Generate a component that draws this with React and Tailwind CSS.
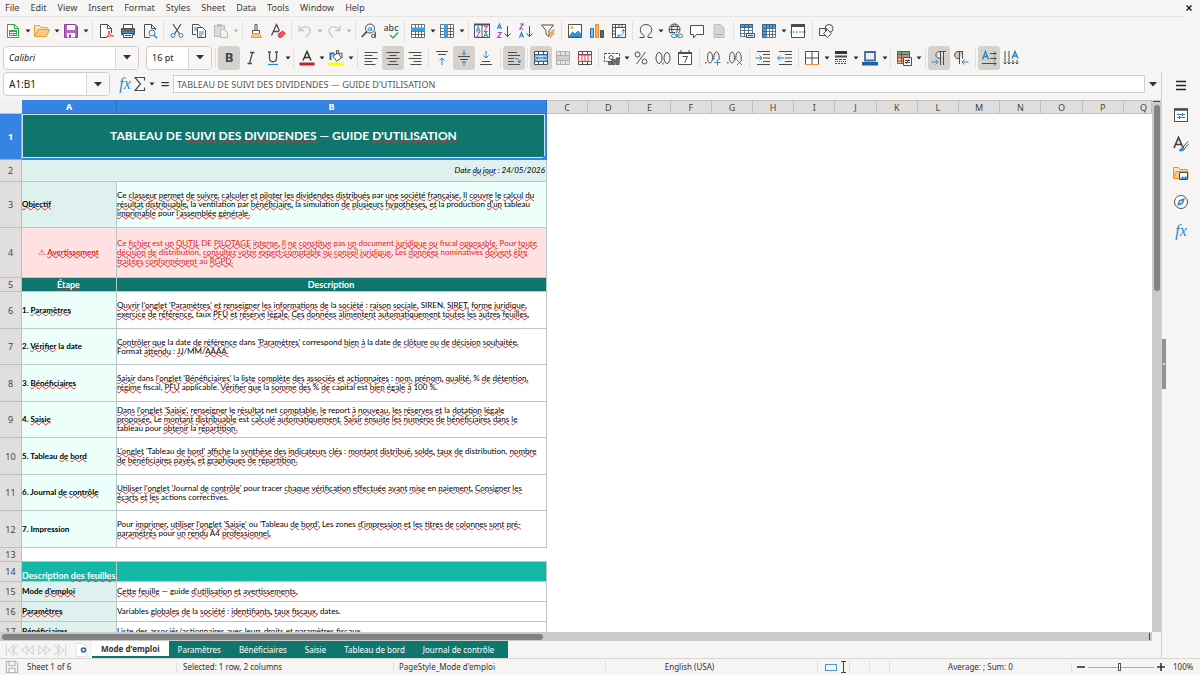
import { useState } from 'react';
import clsx from 'clsx';

const INK = '#4d4d4d';
const BLUE = '#2a87c8';

const MENUS = ['File', 'Edit', 'View', 'Insert', 'Format', 'Styles', 'Sheet', 'Data', 'Tools', 'Window', 'Help'];
const COLUMNS = ['C', 'D', 'E', 'F', 'G', 'H', 'I', 'J', 'K', 'L', 'M', 'N', 'O', 'P', 'Q'];
const SHEETS = ["Mode d'emploi", 'Paramètres', 'Bénéficiaires', 'Saisie', 'Tableau de bord', 'Journal de contrôle'];
const TITLE = "TABLEAU DE SUIVI DES DIVIDENDES — GUIDE D'UTILISATION";

// Text between underscores is flagged by the spell checker
const STEPS = [
  {
    label: '1. _Paramètres_',
    lines: [
      "_Ouvrir l'onglet 'Paramètres' et renseigner les informations de_ la _société_ : _raison sociale,_ SIREN, _SIRET, forme juridique,_",
      '_exercice de référence,_ taux _PFU et réserve légale. Ces données alimentent automatiquement toutes les autres feuilles._',
    ],
  },
  {
    label: '2. _Vérifier_ la date',
    lines: [
      "_Contrôler que_ la date _de référence_ dans _'Paramètres'_ correspond _bien à_ la date _de clôture ou de décision souhaitée._",
      'Format _attendu_ : _JJ_/MM/_AAAA._',
    ],
  },
  {
    label: '3. _Bénéficiaires_',
    lines: [
      "_Saisir_ dans _l'onglet 'Bénéficiaires'_ la _liste complète des associés et actionnaires_ : _nom, prénom, qualité,_ % _de détention,_",
      '_régime_ fiscal, _PFU_ applicable. _Vérifier que_ la _somme des_ % _de_ capital est _bien égale à_ 100 %.',
    ],
  },
  {
    label: '4. _Saisie_',
    lines: [
      "_Dans l'onglet 'Saisie', renseigner le résultat_ net _comptable, le_ report _à nouveau, les réserves et_ la _dotation légale_",
      '_proposée._ Le _montant distribuable_ est _calculé automatiquement. Saisir ensuite les numéros de bénéficiaires dans le_',
      'tableau pour _obtenir_ la _répartition._',
    ],
  },
  {
    label: '5. Tableau _de bord_',
    lines: [
      "_L'onglet_ 'Tableau _de bord' affiche_ la _synthèse des indicateurs clés_ : _montant distribué, solde, taux de_ distribution, _nombre_",
      '_de bénéficiaires payés, et graphiques de répartition._',
    ],
  },
  {
    label: '6. Journal _de contrôle_',
    lines: [
      "_Utiliser l'onglet_ 'Journal _de contrôle'_ pour tracer _chaque vérification effectuée avant mise_ en _paiement. Consigner les_",
      '_écarts et les_ actions correctives.',
    ],
  },
  {
    label: '7. Impression',
    lines: [
      "Pour _imprimer, utiliser l'onglet 'Saisie'_ ou 'Tableau _de bord'._ Les zones _d'impression et les titres de colonnes sont pré-_",
      '_paramétrés_ pour _un rendu_ A4 _professionnel._',
    ],
  },
];

const SHEET_NOTES = [
  { label: "Mode _d'emploi_", text: "_Cette feuille_ — guide _d'utilisation et avertissements._" },
  { label: '_Paramètres_', text: 'Variables _globales de_ la _société_ : _identifiants, taux fiscaux,_ dates.' },
  { label: '_Bénéficiaires_', text: '_Liste des associés/actionnaires avec leurs droits et paramètres fiscaux_' },
];

const Spell = ({ children }) =>
  children.split('_').map((part, i) =>
    i % 2 === 0
      ? part
      : part.split(' ').map((word, j) => (
          <span key={`${i}-${j}`}>
            {j > 0 && ' '}
            <span className="underline decoration-[#e0302c] decoration-wavy decoration-1 underline-offset-[-1px] [text-decoration-skip-ink:none]">
              {word}
            </span>
          </span>
        ))
  );

const Lines = ({ lines }) =>
  lines.map((line) => (
    <div key={line} className="whitespace-nowrap">
      <Spell>{line}</Spell>
    </div>
  ));

/* ---------- icons ---------- */

const Svg = ({ children, size = 'size-4' }) => (
  <svg viewBox="0 0 16 16" fill="none" stroke={INK} strokeWidth="1" className={clsx('shrink-0', size)} aria-hidden="true">
    {children}
  </svg>
);

const Caret = ({ faded }) => (
  <svg viewBox="0 0 6 4" className="h-[4px] w-[6px] shrink-0" aria-hidden="true">
    <path d="M0.6 0.4h4.8L3 3.6z" fill={faded ? '#b5b5b5' : '#222'} />
  </svg>
);

const BigCaret = () => (
  <svg viewBox="0 0 8 5" className="h-[5px] w-[8px] shrink-0" aria-hidden="true">
    <path d="M0 0h8L4 4.6z" fill="#333" />
  </svg>
);

const NewIcon = () => (
  <Svg>
    <path d="M2.5 1.5h7l4 4v9h-11z" fill="#fff" stroke="#3d9b52" />
    <path d="M9.5 1.5v4h4" stroke="#3d9b52" />
    <path d="M4 7h8v6H4z" fill="#3fa757" stroke="none" />
    <path d="M5 9.5h6M5 11.5h3M9 11.5h2" stroke="#fff" />
  </Svg>
);
const OpenIcon = () => (
  <Svg>
    <path d="M.5 13V2.500h5l1.500 2h6V7" fill="#fbe3bd" stroke="#e9a03b" />
    <path d="M.5 13.500L4 6.500h11.500l-3 7z" fill="#fcc87a" stroke="#e9a03b" />
  </Svg>
);
const SaveIcon = () => (
  <Svg>
    <path d="M1.500 1.500h11l2 2v11h-13z" fill="#b565c4" stroke="#8e3fa0" />
    <path d="M4 2h8v5H4zM4 10h8v4.500H4z" fill="#fff" stroke="none" />
    <path d="M6 11.500h2v3H6z" fill="#8e3fa0" stroke="none" />
  </Svg>
);
const PdfIcon = () => (
  <Svg>
    <path d="M13.500 10V5.500l-4-4h-7v13H8" fill="#fff" />
    <path d="M9.500 1.500v4h4" />
    <path d="M8 14.500c2-1 3.200-4 3-6.500 .3 3 1.500 4.500 4.500 5-2.500-.6-5 0-7.500 1.500z" stroke="#dd3b40" />
  </Svg>
);
const PrintIcon = () => (
  <Svg>
    <path d="M3.500 5V1.500h9V5" fill="#fff" />
    <path d="M1.500 5.500h13v6h-13z" fill="#5f6b76" />
    <path d="M3 9h10v1.500H3z" fill="#3d95d6" stroke="none" />
    <path d="M3.500 10.500h9v4h-9z" fill="#fff" />
    <path d="M5 12.500h6" />
  </Svg>
);
const PreviewIcon = () => (
  <Svg>
    <path d="M13.500 7V5.500l-4-4h-7v13H8M9.500 1.500v4h4" />
    <circle cx="10" cy="10" r="3" fill="#eaf4fb" stroke={BLUE} />
    <path d="M12.200 12.200l3 3" stroke={BLUE} strokeWidth="1.400" />
  </Svg>
);
const CutIcon = () => (
  <Svg>
    <path d="M4 1l6.500 10M12 1L5.500 11" strokeWidth="1.200" />
    <circle cx="4" cy="12.500" r="2" stroke={BLUE} />
    <circle cx="12" cy="12.500" r="2" stroke={BLUE} />
  </Svg>
);
const CopyIcon = () => (
  <Svg>
    <path d="M5 11.500H1.500v-10h6l2 2V4" fill="#fff" />
    <path d="M6.500 4.500h5l3 3v7h-8z" fill="#fff" />
    <path d="M8 9h5M8 11h5M8 13h3M3 5h3M3 7h3" stroke={BLUE} />
  </Svg>
);
const PasteIcon = () => (
  <Svg>
    <path d="M1.500 2.500h10v11h-10z" fill="#dedddc" stroke="#bbb" />
    <path d="M4.500 1.500h4v2h-4z" fill="#c4c3c2" stroke="#bbb" />
    <path d="M7.500 6.500h4l3 3v5h-7z" fill="#f2f1f0" stroke="#bbb" />
  </Svg>
);
const CloneIcon = () => (
  <Svg>
    <path d="M7 1.500h2v6H7zM4.500 7.500h7v3h-7z" fill="#fff" />
    <path d="M4.500 10.500l-1 4h10l-2-4z" fill="#fbc476" stroke="#e9a03b" />
    <path d="M3 14.500h11" stroke="#e9a03b" />
  </Svg>
);
const ClearIcon = () => (
  <Svg>
    <path d="M1.500 12.500L6.500 1.500l3 6.500M3.300 8.500H9" strokeWidth="1.300" />
    <path d="M8 11.500l4.500-3.500 2.800 2.500L11 14.500H9z" fill="#ee5a5f" stroke="#d8353b" />
  </Svg>
);
const UndoIcon = ({ flip }) => (
  <Svg>
    <path
      d={flip ? 'M14 2.500v5H9M14 7.500C10 2 3 3 3 8c0 3 2 4 4 6' : 'M2 2.500v5h5M2 7.500C6 2 13 3 13 8c0 3-2 4-4 6'}
      stroke="#c6c5c4"
      strokeWidth="1.300"
    />
  </Svg>
);
const FindIcon = () => (
  <Svg>
    <circle cx="9" cy="5.500" r="4.500" fill="#f4fafd" />
    <path d="M5.800 8.700L.8 14" strokeWidth="1.800" />
    <circle cx="8.600" cy="6.200" r="1.500" stroke={BLUE} />
    <path d="M10.500 4.500v3.300" stroke={BLUE} />
    <circle cx="12.300" cy="13" r="1.700" />
    <path d="M14.300 8.500v6.200" strokeWidth="1.200" />
  </Svg>
);
const SpellIcon = () => (
  <span className="relative flex h-4 w-4 justify-center text-[9px] leading-[9px] text-[#333]">
    abc
    <svg viewBox="0 0 10 7" className="absolute right-0 bottom-0 h-[7px] w-[10px]" aria-hidden="true">
      <path d="M1 3l3 3 5-5.500" fill="none" stroke="#3fa757" strokeWidth="1.400" />
    </svg>
  </span>
);
const GridLines = ({ color = INK }) => (
  <path d="M1.500 1.500h13v13h-13zM1.500 5.500h13M1.500 8.500h13M1.500 11.500h13M5.500 1.500v13M8.500 1.500v13M11.500 1.500v13" stroke={color} strokeWidth=".8" />
);
const RowIcon = () => (
  <Svg>
    <path d="M1 1h14v14H1z" fill="#fff" stroke="none" />
    <GridLines />
    <path d="M1 4.500h14v4H1z" fill="#3d9fe0" stroke="none" />
  </Svg>
);
const ColumnIcon = () => (
  <Svg>
    <path d="M1 1h14v14H1z" fill="#fff" stroke="none" />
    <GridLines />
    <path d="M5 1h4v14H5z" fill="#3d9fe0" stroke="none" />
  </Svg>
);
const LETTER_A = 'M0 5L2 0l2 5M.8 3.500h2.400';
const LETTER_Z = 'M.3 0h3.400L.3 5h3.500';
const SortIcon = () => (
  <Svg>
    <path d="M.5 1.500h15v13H.5z" fill="#fff" />
    <path d="M0 1.500h16" strokeWidth="2" />
    <path d="M8 2v12.500" />
    <g stroke={BLUE}><path d={LETTER_A} transform="translate(2.200 3.500)" /><path d={LETTER_A} transform="translate(9.800 9)" /></g>
    <g stroke="#a848b5"><path d={LETTER_Z} transform="translate(2.200 9)" /><path d={LETTER_Z} transform="translate(9.800 3.500)" /></g>
  </Svg>
);
const AzIcon = ({ down }) => (
  <Svg>
    <path d={LETTER_A} stroke={BLUE} transform={down ? 'translate(1.500 9.500)' : 'translate(1.500 1)'} strokeWidth="1.200" />
    <path d={LETTER_Z} stroke="#a848b5" transform={down ? 'translate(1.500 1)' : 'translate(1.500 9.500)'} strokeWidth="1.200" />
    <path d="M11.500 3v10.500M8.500 10.500l3 3 3-3" />
  </Svg>
);
const FilterIcon = () => (
  <Svg>
    <path d="M1.500 2h12L9 7.500v6L6 11V7.500z" fill="#fff" />
    <path d="M12.500 7l-3 4h2l-1.500 4 4.500-5h-2l2-3z" fill="#fbb04c" stroke="#e9902b" strokeWidth=".6" />
  </Svg>
);
const ImageIcon = () => (
  <Svg>
    <path d="M1.500 1.500h13v13h-13z" fill="#fff" />
    <path d="M2 14l3.500-5L8 11l3-3 3.500 4v2z" fill="#3d95d6" stroke="#2372b4" strokeWidth=".8" />
    <circle cx="5" cy="4.500" r="1.500" fill="#fbb04c" stroke="none" />
  </Svg>
);
const ChartIcon = () => (
  <Svg>
    <path d="M1.500 5.500h3v9h-3z" fill="#83beec" stroke="#2372b4" />
    <path d="M6.500 1.500h3v13h-3z" fill="#fbb04c" stroke="#e9902b" />
    <path d="M11.500 7.500h3v7h-3z" fill="#666" />
  </Svg>
);
const PivotIcon = () => (
  <Svg>
    <path d="M1.500 1.500h13v13h-13z" fill="#fff" />
    <path d="M1.500 4.500h13M4.500 1.500v13M8 1.500v3M11 1.500v3M1.500 8h3M1.500 11h3" />
    <path d="M7 13c4 0 5.500-2 5.500-6M10.500 8.500l2-2 1.500 2M8.500 11l-2 2 2 1.500" stroke={BLUE} />
  </Svg>
);
const OmegaIcon = () => (
  <Svg>
    <path d="M1.500 14.500H6v-2C3 10.500 2.300 8.500 2.300 6.500 2.300 3.500 4.800 1.500 8 1.500s5.700 2 5.700 5c0 2-.7 4-3.700 6v2h4.500" />
  </Svg>
);
const LinkIcon = () => (
  <Svg>
    <circle cx="7.500" cy="6.500" r="5.500" />
    <path d="M7.500 1c-4 3-4 7 0 11M7.500 1c4 3 4 7 0 11M2 6.500h11M3 3.500h9M3 9.500h5" />
    <path d="M4 10h12v6H4z" fill="#f6f5f4" stroke="none" />
    <rect x="4.500" y="11" width="5.500" height="3.500" rx="1.700" stroke={BLUE} />
    <rect x="10" y="11" width="5.500" height="3.500" rx="1.700" stroke={BLUE} />
    <path d="M8 12.800h4.500" stroke={BLUE} />
  </Svg>
);
const CommentIcon = () => (
  <Svg>
    <path d="M1.500 2.500h13v9h-7L4.500 15v-3.500h-3z" fill="#fff" />
  </Svg>
);
const HeaderIcon = () => (
  <Svg>
    <path d="M3 1.500h6.500l3.500 3.500v9.500H3z" fill="#d6d5d4" stroke="#bfbebd" />
    <path d="M5 11.500h6" stroke="#aaa" />
  </Svg>
);
const PrintAreaIcon = () => (
  <Svg>
    <path d="M1 1h13v13H1z" fill="#fff" stroke="none" />
    <path d="M1 1h13v4H1z" fill="#3d9fe0" stroke="none" />
    <path d="M1.500 1.500h12v12h-12zM1.500 4.500h12M1.500 7.500h12M1.500 10.500h12M5.500 1.500v12M9.500 1.500v12" stroke="#3b5873" strokeWidth=".8" />
    <path d="M7.500 10.500h8v4h-8z" fill="#dcecf7" />
    <path d="M9 12.500h5" />
  </Svg>
);
const FreezeIcon = () => (
  <Svg>
    <path d="M1 1h14v14H1z" fill="#fff" stroke="none" />
    <path d="M1 1h14v4H1zM1 1h4v14H1z" fill="#3d9fe0" stroke="none" />
    <GridLines color="#3b5873" />
  </Svg>
);
const SplitIcon = () => (
  <Svg>
    <path d="M1.500 1.500h13v13h-13z" fill="#fff" />
    <path d="M1 2.500h14" strokeWidth="3" />
    <path d="M0 9h16" stroke={BLUE} strokeDasharray="2 1" />
  </Svg>
);
const ShapesIcon = () => (
  <Svg>
    <path d="M1.500 5.500h7v7h-7z" />
    <circle cx="11" cy="5.500" r="4" />
    <path d="M9.500 6.500l4 4-4 4-4-4z" fill="#f6f5f4" />
  </Svg>
);

const AlignIcon = ({ kind }) => (
  <Svg>
    {kind === 'left' && <path d="M1.500 2.500h13M1.500 5.500h8M1.500 8.500h13M1.500 11.500h8M1.500 14.500h11" />}
    {kind === 'center' && <path d="M1.500 2.500h13M4.500 5.500h7M1.500 8.500h13M4.500 11.500h7M2.500 14.500h11" />}
    {kind === 'right' && <path d="M1.500 2.500h13M6.500 5.500h8M1.500 8.500h13M6.500 11.500h8M3.500 14.500h11" />}
  </Svg>
);
const VAlignIcon = ({ kind }) => (
  <Svg>
    {kind === 'top' && <><path d="M2 1.500h12M4 4.500h8" /><path d="M8 15V8M5.500 10.500L8 8l2.500 2.500" stroke={BLUE} /></>}
    {kind === 'middle' && <><path d="M2 6.500h12M4 9.500h8" /><path d="M8 0v5M6 3l2 2 2-2M8 16v-5M6 13l2-2 2 2" stroke={BLUE} /></>}
    {kind === 'bottom' && <><path d="M2 14.500h12M4 11.500h8" /><path d="M8 1v7M5.500 5.500L8 8l2.500-2.500" stroke={BLUE} /></>}
  </Svg>
);
const WrapIcon = () => (
  <Svg>
    <path d="M2 2.500h9M2 5.500h12M2 8.500h6M2 11.500h6M2 14.500h12" />
    <path d="M9 8.500c3 0 4.500 1 4.500 4M11.500 11l2 2 1.500-2.500" stroke={BLUE} />
  </Svg>
);
const MergeIcon = () => (
  <Svg>
    <path d="M1.500 1.500h13v13h-13z" fill="#fff" />
    <path d="M1.500 4.500h13M1.500 11.500h13M5.500 1.500v3M10.500 1.500v3M5.500 11.500v3M10.500 11.500v3" />
    <path d="M2 5h12v6H2z" fill="#cfe8f8" stroke={BLUE} />
    <path d="M3 8h10M5 6.500L3.500 8 5 9.500M11 6.500L12.500 8 11 9.500" stroke="#1d6ca8" />
  </Svg>
);
const UnmergeIcon = () => (
  <Svg>
    <path d="M1.500 1.500h13v13h-13z" fill="#e4e3e2" stroke="#b0afae" />
    <path d="M1.500 5.500h13M1.500 10.500h13M5.500 1.500v13M10.500 1.500v4M10.500 10.500v4" stroke="#b0afae" />
    <path d="M2 6h12v4H2z" fill="#cfcecd" stroke="none" />
  </Svg>
);
const SplitCellsIcon = () => (
  <Svg>
    <path d="M1.500 1.500h13v13h-13z" fill="#fff" />
    <path d="M1.500 4.500h13M1.500 11.500h13M5.500 1.500v3M10.500 1.500v3M5.500 11.500v3M10.500 11.500v3" />
    <path d="M1.500 5h13v6.500h-13zM5 5v6.500M8 5v6.500M11 5v6.500" stroke="#dd3b40" />
  </Svg>
);
const ItalicIcon = () => (
  <Svg>
    <path d="M7 2.500h4.500M4.500 13.500H9M9.500 2.500l-3 11" strokeWidth="1.300" />
  </Svg>
);
const UnderlineIcon = () => (
  <Svg>
    <path d="M4.500 2v6c0 5 7 5 7 0V2M3 2h3M10 2h3" strokeWidth="1.300" />
    <path d="M3 14.500h10" stroke={BLUE} strokeWidth="1.200" />
  </Svg>
);
const FontColorIcon = () => (
  <Svg>
    <path d="M4 10.500L8 1.500l4 9M5.500 7.500h5" strokeWidth="1.500" stroke="#333" />
    <path d="M.5 12.500h15v3H.5z" fill="#c9211e" stroke="none" />
  </Svg>
);
const HighlightIcon = () => (
  <Svg>
    <path d="M1.500 3.500h5M2.500 4v6" stroke="#2372b4" strokeWidth="2" />
    <path d="M5 6l5-3 3.500 5-5 3z" fill="#fff" />
    <path d="M8.500 4V.5h2v2.500M11 3.500l3-.5v5" />
    <path d="M.5 12.500h15v3H.5z" fill="#ff0" stroke="none" />
  </Svg>
);
const CurrencyIcon = () => (
  <Svg>
    <path d="M.5 3.500h15v8H.5z" strokeDasharray="2.500 1.200" fill="#fff" />
    <circle cx="7" cy="7.500" r="2" />
    <path d="M4.500 14.500v-3h3v3zM8 14.500V9.500h3v5zM12 14.500V8h3v6.500z" fill="#777" strokeWidth=".8" />
  </Svg>
);
const PercentIcon = () => (
  <Svg>
    <circle cx="4.500" cy="4.500" r="2.500" />
    <circle cx="11.500" cy="11.500" r="2.500" />
    <path d="M12.500 2l-9 12" />
  </Svg>
);
const DecimalIcon = () => (
  <Svg>
    <ellipse cx="4" cy="8" rx="3" ry="5.500" />
    <ellipse cx="12" cy="8" rx="3" ry="5.500" />
    <path d="M8 12.500v2" />
  </Svg>
);
const DateIcon = () => (
  <Svg>
    <path d="M1.500 3h13v11.500h-13z" fill="#fff" />
    <path d="M1 3h14" strokeWidth="2" />
    <path d="M4 0v3M12 0v3M5.500 6.500h5L7.500 13" />
  </Svg>
);
const DecimalPlaceIcon = ({ remove }) => (
  <Svg>
    <path d="M.8 12v1.500" strokeWidth="1.200" />
    <ellipse cx="5" cy="7.500" rx="2.500" ry="5.500" />
    <ellipse cx="11.500" cy="7.500" rx="2.700" ry="5.500" />
    <path d="M9 10h7v6H9z" fill="#f6f5f4" stroke="none" />
    {remove
      ? <path d="M10 10l5 5M15 10l-5 5" stroke="#dd3b40" />
      : <path d="M12.500 9.500v6M9.500 12.500h6" stroke={BLUE} />}
  </Svg>
);
const IndentIcon = ({ back }) => (
  <Svg>
    <path d="M2 1.500h13M8 4.500h7M8 8h7M8 11.500h7M2 14.500h13" />
    <path d={back ? 'M7 8H.5M3 5.500L.5 8 3 10.500' : 'M.5 8H7M4.500 5.500L7 8l-2.500 2.500'} stroke={BLUE} />
  </Svg>
);
const BordersIcon = () => (
  <Svg>
    <path d="M2 2h12v12H2z" fill="#fff" stroke="none" />
    <path d="M1.500 14V1.500h13V14M8 1.500V14M1.500 8h13" />
    <path d="M1 14.500h14" stroke="#f0933a" />
  </Svg>
);
const LineStyleIcon = () => (
  <Svg>
    <path d="M2 2.500h12" strokeWidth="3" stroke="#333" />
    <path d="M2 6.500h12" strokeWidth="2" />
    <path d="M2 9.500h12" strokeDasharray="3 1" />
    <path d="M2 11.500h12" strokeDasharray="1 1" />
    <path d="M2 13.500h12" strokeDasharray="2 1" />
  </Svg>
);
const LineColorIcon = () => (
  <Svg>
    <path d="M3 2h10v8.500H3z" fill="#eee" stroke="#3d6f9e" strokeWidth="1.800" />
    <path d="M0 12h16v3.500H0z" fill="#1f5fa8" stroke="none" />
  </Svg>
);
const ConditionalIcon = () => (
  <Svg>
    <path d="M1 1h13v3.500H1z" fill="#58b36b" stroke="none" />
    <path d="M1 4.500h13V8H1z" fill="#f0787b" stroke="none" />
    <path d="M1 8h7v5H1z" fill="#fbc476" stroke="none" />
    <path d="M1.500 1.500h12v12h-12zM5.500 1.500v12M1.500 4.500h12M1.500 8h12M1.500 11h12" strokeWidth=".8" />
    <path d="M7.500 7.500h8v8h-8z" fill="#fff" />
    <path d="M9 10.500h5M9 12.500h5M13 9l-3 5" />
  </Svg>
);
const ParagraphIcon = ({ rtl }) => (
  <Svg>
    <path
      d={rtl
        ? 'M6.500 14V1.500M9.500 8.500v-7M10 1.500H5C.5 1.500.5 8.500 5 8.500h1.500'
        : 'M9.500 15V1.500M12.500 15V1.500M15 1.500H9C3.500 1.500 3.500 8.500 9 8.500'}
      fill={rtl ? '#c9c8c7' : '#e4e3e2'}
    />
    <path d={rtl ? 'M15.500 12H9M11.500 9.500L9 12l2.500 2.500' : 'M.5 12H7M4.500 9.500L7 12l-2.500 2.500'} stroke={BLUE} />
  </Svg>
);
const TextDirIcon = ({ vertical }) => (
  <Svg>
    {vertical ? (
      <>
        <path d="M9 8.500l3-7 3 7M10 6h4" stroke={BLUE} strokeWidth="1.400" />
        <path d="M2 1v13M.5 12.500L2 14l1.500-1.500M6 1v13M4.500 12.500L6 14l1.500-1.500M10 10v4M8.500 12.500l1.500 1.500 1.500-1.500M14 10v4M12.500 12.500L14 14l1.500-1.500" />
      </>
    ) : (
      <>
        <path d="M1.500 9.500l3-8 3 8M2.500 6.500h4" stroke={BLUE} strokeWidth="1.400" />
        <path d="M9 3.500h6M13 1.500l2 2-2 2M9 8.500h6M13 6.500l2 2-2 2M1 13.500h14M13 11.500l2 2-2 2" />
      </>
    )}
  </Svg>
);
const FxIcon = () => (
  <span className="font-['Liberation_Serif',serif] text-[16px] leading-4 text-[#2a87c8] italic">fx</span>
);
const SigmaIcon = () => (
  <Svg>
    <path d="M12.500 4.500v-3H3L8.500 8 3 14.500h9.500v-3" strokeWidth="1.200" />
  </Svg>
);
const HamburgerIcon = () => (
  <Svg>
    <path d="M3 3.500h10M3 7.500h10M3 11.500h10" stroke="#222" strokeWidth="1.600" />
  </Svg>
);
const PropertiesIcon = () => (
  <Svg>
    <path d="M1.500 2h13v12.500h-13z" fill="#fff" />
    <path d="M1 2.500h14" strokeWidth="2.500" />
    <path d="M4 7.500h8M4 10.500h8" stroke={BLUE} />
    <path d="M9.500 6v3M6.500 9v3" stroke={BLUE} />
  </Svg>
);
const StylesIcon = () => (
  <Svg>
    <path d="M1 12L5.500 1.500l4 9M2.500 8.500h6" strokeWidth="1.700" stroke="#444" />
    <path d="M15 5.500L10 11l1.500 1.500L16 7.500" fill="#fff" />
    <path d="M6 14.500c2 0 2-3.500 4-3.500l1.500 1.500c0 2-3 3-5.500 2z" fill="#3d9fe0" stroke="#2372b4" />
  </Svg>
);
const GalleryIcon = () => (
  <Svg>
    <path d="M.5 13V2.500h5l1.500 2h7v3" fill="#fbe3bd" stroke="#e9902b" />
    <path d="M.5 13.500L3 6.500h12v7z" fill="#fcc87a" stroke="#e9902b" />
    <path d="M6.500 7.500h8v7h-8z" fill="#fff" />
    <path d="M7 14l2.500-3 1.500 1.500 1.500-1.500 2 2v1z" fill="#3d95d6" stroke="none" />
  </Svg>
);
const NavigatorIcon = () => (
  <Svg>
    <circle cx="8" cy="8" r="6.500" fill="#fff" />
    <path d="M11.500 4.500L9.700 9.700 4.500 11.500l1.800-5.200z" fill="#3d95d6" stroke="#2372b4" strokeWidth=".6" />
    <circle cx="8" cy="8" r="1" fill="#fff" stroke="none" />
  </Svg>
);

/* ---------- toolbar pieces ---------- */

const ToolButton = ({ label, active, disabled, children }) => (
  <button
    type="button"
    aria-label={label}
    aria-pressed={active}
    disabled={disabled}
    className={clsx('flex h-6 w-[22px] shrink-0 items-center justify-center rounded-[3px]', active && 'bg-[#d5d1cd]')}
  >
    {children}
  </button>
);

const DropButton = ({ label, disabled, children }) => (
  <div className="flex shrink-0 items-center">
    <ToolButton label={label} disabled={disabled}>{children}</ToolButton>
    <button type="button" aria-label={`${label} options`} disabled={disabled} className="flex h-6 w-[7px] items-center justify-center">
      <Caret faded={disabled} />
    </button>
  </div>
);

const Sep = ({ wide }) => (
  <div className={clsx('flex h-5 shrink-0 justify-center', wide ? 'w-[6px]' : 'w-[5px]')}>
    <div className="w-px bg-[#e3e1df]" />
  </div>
);

const ComboBox = ({ label, value, className, inputClass }) => (
  <div className={clsx('flex h-6 shrink-0 overflow-hidden rounded-[4px] border border-[#d0cdca] bg-white', className)}>
    <input aria-label={label} defaultValue={value} className={clsx('min-w-0 flex-1 bg-transparent pl-[5px] text-[#222] outline-none', inputClass)} />
    <button type="button" aria-label={`${label} list`} className="flex w-[23px] shrink-0 items-center justify-center border-l border-[#dcdad8] bg-[#f8f7f6]">
      <BigCaret />
    </button>
  </div>
);

const StandardToolbar = () => (
  <div role="toolbar" aria-label="Standard" className="flex h-[27px] items-center pl-0.5">
    <DropButton label="New"><NewIcon /></DropButton>
    <DropButton label="Open"><OpenIcon /></DropButton>
    <DropButton label="Save"><SaveIcon /></DropButton>
    <Sep wide />
    <ToolButton label="Export as PDF"><PdfIcon /></ToolButton>
    <ToolButton label="Print"><PrintIcon /></ToolButton>
    <ToolButton label="Print preview"><PreviewIcon /></ToolButton>
    <Sep />
    <ToolButton label="Cut"><CutIcon /></ToolButton>
    <ToolButton label="Copy"><CopyIcon /></ToolButton>
    <DropButton label="Paste" disabled><PasteIcon /></DropButton>
    <Sep wide />
    <ToolButton label="Clone formatting"><CloneIcon /></ToolButton>
    <ToolButton label="Clear formatting"><ClearIcon /></ToolButton>
    <Sep />
    <DropButton label="Undo" disabled><UndoIcon /></DropButton>
    <DropButton label="Redo" disabled><UndoIcon flip /></DropButton>
    <Sep wide />
    <ToolButton label="Find and replace"><FindIcon /></ToolButton>
    <ToolButton label="Spelling"><SpellIcon /></ToolButton>
    <Sep />
    <DropButton label="Row"><RowIcon /></DropButton>
    <DropButton label="Column"><ColumnIcon /></DropButton>
    <Sep wide />
    <ToolButton label="Sort"><SortIcon /></ToolButton>
    <ToolButton label="Sort ascending"><AzIcon /></ToolButton>
    <ToolButton label="Sort descending"><AzIcon down /></ToolButton>
    <ToolButton label="AutoFilter"><FilterIcon /></ToolButton>
    <Sep />
    <ToolButton label="Image"><ImageIcon /></ToolButton>
    <ToolButton label="Chart"><ChartIcon /></ToolButton>
    <ToolButton label="Pivot table"><PivotIcon /></ToolButton>
    <Sep />
    <DropButton label="Special character"><OmegaIcon /></DropButton>
    <ToolButton label="Hyperlink"><LinkIcon /></ToolButton>
    <ToolButton label="Comment"><CommentIcon /></ToolButton>
    <ToolButton label="Headers and footers" disabled><HeaderIcon /></ToolButton>
    <Sep wide />
    <ToolButton label="Define print area"><PrintAreaIcon /></ToolButton>
    <DropButton label="Freeze"><FreezeIcon /></DropButton>
    <ToolButton label="Split window"><SplitIcon /></ToolButton>
    <Sep wide />
    <ToolButton label="Draw functions"><ShapesIcon /></ToolButton>
  </div>
);

const FormattingToolbar = () => (
  <div role="toolbar" aria-label="Formatting" className="flex h-[27px] items-center pl-[3px]">
    <ComboBox label="Font name" value="Calibri" className="mr-[7px] w-[136px]" inputClass="text-[9px] italic" />
    <ComboBox label="Font size" value="16 pt" className="w-[66px]" inputClass="text-[9px]" />
    <Sep wide />
    <ToolButton label="Bold" active><span className="text-[13px] font-bold text-[#444]">B</span></ToolButton>
    <ToolButton label="Italic"><ItalicIcon /></ToolButton>
    <DropButton label="Underline"><UnderlineIcon /></DropButton>
    <Sep />
    <DropButton label="Font color"><FontColorIcon /></DropButton>
    <DropButton label="Highlighting"><HighlightIcon /></DropButton>
    <Sep wide />
    <ToolButton label="Align left"><AlignIcon kind="left" /></ToolButton>
    <ToolButton label="Align center" active><AlignIcon kind="center" /></ToolButton>
    <ToolButton label="Align right"><AlignIcon kind="right" /></ToolButton>
    <Sep />
    <ToolButton label="Align top"><VAlignIcon kind="top" /></ToolButton>
    <ToolButton label="Center vertically" active><VAlignIcon kind="middle" /></ToolButton>
    <ToolButton label="Align bottom"><VAlignIcon kind="bottom" /></ToolButton>
    <Sep wide />
    <ToolButton label="Wrap text" active><WrapIcon /></ToolButton>
    <Sep />
    <ToolButton label="Merge and center" active><MergeIcon /></ToolButton>
    <ToolButton label="Merge cells" disabled><UnmergeIcon /></ToolButton>
    <ToolButton label="Split cells"><SplitCellsIcon /></ToolButton>
    <Sep />
    <DropButton label="Currency"><CurrencyIcon /></DropButton>
    <ToolButton label="Percent"><PercentIcon /></ToolButton>
    <ToolButton label="Number"><DecimalIcon /></ToolButton>
    <ToolButton label="Date"><DateIcon /></ToolButton>
    <Sep wide />
    <ToolButton label="Add decimal place"><DecimalPlaceIcon /></ToolButton>
    <ToolButton label="Delete decimal place"><DecimalPlaceIcon remove /></ToolButton>
    <Sep wide />
    <ToolButton label="Increase indent"><IndentIcon /></ToolButton>
    <ToolButton label="Decrease indent"><IndentIcon back /></ToolButton>
    <Sep />
    <DropButton label="Borders"><BordersIcon /></DropButton>
    <DropButton label="Border style"><LineStyleIcon /></DropButton>
    <DropButton label="Border color"><LineColorIcon /></DropButton>
    <Sep />
    <DropButton label="Conditional formatting"><ConditionalIcon /></DropButton>
    <Sep wide />
    <ToolButton label="Left-to-right" active><ParagraphIcon /></ToolButton>
    <ToolButton label="Right-to-left"><ParagraphIcon rtl /></ToolButton>
    <Sep wide />
    <ToolButton label="Horizontal text" active><TextDirIcon /></ToolButton>
    <ToolButton label="Vertical text"><TextDirIcon vertical /></ToolButton>
  </div>
);

const FormulaBar = () => (
  <div className="flex h-[29px] shrink-0 items-start pt-px pl-[3px]">
    <ComboBox label="Name box" value="A1:B1" className="w-[107px]" inputClass="text-[10px]" />
    <div className="flex h-6 w-[63px] shrink-0 items-center">
      <button type="button" aria-label="Function wizard" className="ml-2 flex w-[14px] justify-center"><FxIcon /></button>
      <button type="button" aria-label="Select function" className="flex w-[25px] items-center gap-px"><SigmaIcon /><Caret /></button>
      <button type="button" aria-label="Formula" className="flex size-4 items-center justify-center text-[16px] text-[#333]">=</button>
    </div>
    <input
      aria-label="Input line"
      defaultValue={TITLE}
      className="mt-[3px] h-[18px] min-w-0 flex-1 border border-[#d0cdca] bg-white pl-[3px] text-[9px] text-[#555] outline-none"
    />
    <button type="button" aria-label="Expand formula bar" className="flex h-6 w-4 items-center justify-center"><BigCaret /></button>
  </div>
);

/* ---------- sheet ---------- */

const RowHead = ({ n, selected }) => (
  <th
    scope="row"
    className={clsx(
      'border-r border-b p-0 text-center align-middle text-[9px] leading-[9px]',
      selected ? 'border-[#7fb0ef] bg-[#3584e4] font-bold text-white' : 'border-[#bfbfbf] bg-[#e1dfde] font-normal text-[#444]'
    )}
  >
    {n}
  </th>
);

const Blank = () => <td colSpan={COLUMNS.length} className="p-0" />;

const cell = 'border-r border-b border-[#b9c8c8] py-0 pr-px pl-0 overflow-hidden whitespace-nowrap';

const Sheet = () => (
  <table className="w-full table-fixed border-separate border-spacing-0 font-[Lato,sans-serif] text-[8px] leading-[9px] text-black">
    <colgroup>
      <col className="w-[22px]" />
      <col className="w-[95px]" />
      <col className="w-[430px]" />
      {COLUMNS.map((c) => <col key={c} className={c === 'Q' ? 'w-[28px]' : undefined} />)}
    </colgroup>
    <thead className="font-['Noto_Sans',sans-serif] text-[9px]">
      <tr className="h-[14px]">
        <th aria-label="Select all" className="border-b border-[#c8c6c4] bg-[#f1f0ef] p-0" />
        {['A', 'B'].map((c) => (
          <th key={c} scope="col" className="border-r border-b border-[#2f72c4] bg-[#3584e4] p-0 font-bold text-white">{c}</th>
        ))}
        {COLUMNS.map((c) => (
          <th
            key={c}
            scope="col"
            className={clsx('border-t border-r border-b border-[#bfbfbf] bg-[#e1dfde] p-0 font-normal text-[#444]', c === 'Q' && 'pl-3')}
          >
            {c}
          </th>
        ))}
      </tr>
    </thead>
    <tbody className="[&_th]:font-['Noto_Sans',sans-serif]">
      <tr className="h-[46px]">
        <RowHead n={1} selected />
        <td
          colSpan={2}
          className="relative border-r-2 border-b-2 border-[#3584e4] bg-[#0f766e] p-0 text-center text-[12px] leading-4 font-bold text-white shadow-[inset_0_0_0_1px_#cfe3e8]"
        >
          <Spell>{"TABLEAU DE _SUIVI DES DIVIDENDES_ — GUIDE _D'UTILISATION_"}</Spell>
          <span className="absolute -right-0.5 -bottom-0.5 size-1 bg-[#3584e4]" />
        </td>
        <Blank />
      </tr>
      <tr className="h-[22px]">
        <RowHead n={2} />
        <td colSpan={2} className={clsx(cell, 'bg-[#dff1ef] text-right italic')}><Spell>{'Date _du jour_ : 24/05/2026'}</Spell></td>
        <Blank />
      </tr>
      <tr className="h-[46px]">
        <RowHead n={3} />
        <td className={clsx(cell, 'bg-[#dff1ef] font-bold')}><Spell>_Objectif_</Spell></td>
        <td className={clsx(cell, 'bg-[#edfffb]')}>
          <Lines
            lines={[
              'Ce _classeur permet de suivre, calculer et piloter les dividendes distribués_ par _une société française. Il couvre le calcul du_',
              "_résultat distribuable,_ la ventilation par _bénéficiaire,_ la simulation _de plusieurs hypothèses, et_ la production _d'un_ tableau",
              "_imprimable_ pour _l'assemblée générale._",
            ]}
          />
        </td>
        <Blank />
      </tr>
      <tr className="h-[50px] text-[#dc2626]">
        <RowHead n={4} />
        <td className={clsx(cell, 'bg-[#ffe1e1] text-center font-bold')}>
          <span className="font-['DejaVu_Sans',sans-serif] font-normal">⚠</span> <Spell>_Avertissement_</Spell>
        </td>
        <td className={clsx(cell, 'bg-[#ffe1e1]')}>
          <Lines
            lines={[
              'Ce _fichier_ est _un OUTIL_ DE _PILOTAGE interne. Il ne constitue_ pas _un_ document _juridique ou_ fiscal _opposable._ Pour _toute_',
              '_décision de_ distribution, _consultez votre expert-comptable ou conseil juridique._ Les _données_ nominatives _doivent être_',
              '_traitées conformément_ au _RGPD._',
            ]}
          />
        </td>
        <Blank />
      </tr>
      <tr className="h-[14px] text-[9px] font-bold text-white">
        <RowHead n={5} />
        <td className={clsx(cell, 'bg-[#0f766e] text-center')}><Spell>_Étape_</Spell></td>
        <td className={clsx(cell, 'bg-[#0f766e] text-center')}>Description</td>
        <Blank />
      </tr>
      {STEPS.map((step, i) => (
        <tr key={step.label} className={i % 2 === 0 ? 'h-[37px]' : 'h-[36px]'}>
          <RowHead n={i + 6} />
          <td className={clsx(cell, 'bg-[#edfffb] font-bold')}><Spell>{step.label}</Spell></td>
          <td className={cell}><Lines lines={step.lines} /></td>
          <Blank />
        </tr>
      ))}
      <tr className="h-[14px]">
        <RowHead n={13} />
        <td colSpan={2} className="border-b border-[#b9c8c8] p-0" />
        <Blank />
      </tr>
      <tr className="h-[20px] text-[9px]">
        <RowHead n={14} />
        <td className="border-r border-b border-[#b9c8c8] bg-[#14b8a6] p-0 pb-px align-bottom font-bold whitespace-nowrap text-white">
          <Spell>{'Description _des feuilles_'}</Spell>
        </td>
        <td className={clsx(cell, 'bg-[#14b8a6]')} />
        <Blank />
      </tr>
      {SHEET_NOTES.map((note) => (
        <tr key={note.label} className="h-[20px]">
          <RowHead n={SHEET_NOTES.indexOf(note) + 15} />
          <td className={clsx(cell, 'bg-[#dff1ef] font-bold')}><Spell>{note.label}</Spell></td>
          <td className={cell}><Spell>{note.text}</Spell></td>
          <Blank />
        </tr>
      ))}
    </tbody>
  </table>
);

const SheetTabs = () => {
  const [current, setCurrent] = useState(0);
  return (
    <div className="flex h-[17px] shrink-0 items-stretch">
      <div className="flex w-[70px] items-center gap-0.5 pl-[5px]">
        {[
          'M1.500 2v12M15 2L8 8l7 6M10 2L3.500 8l6.500 6z',
          'M14 3L8 8l6 5zM7 3L1 8l6 5z',
          'M2 3l6 5-6 5zM9 3l6 5-6 5z',
          'M14.500 2v12M1 2l7 6-7 6M6 2l6.500 6L6 14z',
        ].map((d) => (
          <button key={d} type="button" aria-label="Scroll sheets" disabled>
            <Svg size="size-[14px]"><path d={d} stroke="#c9c8c7" /></Svg>
          </button>
        ))}
      </div>
      <button type="button" aria-label="Add sheet" className="flex w-[22px] items-center justify-center">
        <Svg>
          <path d="M3 1.500h7l3 3v10H3z" fill="#fff" stroke="#e2e1e0" />
          <circle cx="10.500" cy="8" r="2" fill="#fff" stroke="#2b5fb0" strokeWidth="1.600" />
        </Svg>
      </button>
      <div role="tablist" aria-label="Sheets" className="flex bg-[#0f766e] pr-[5px]">
        {SHEETS.map((name, i) => (
          <button
            key={name}
            type="button"
            role="tab"
            aria-selected={i === current}
            onClick={() => setCurrent(i)}
            className={clsx('px-[9px] text-[8px]', i === current ? 'mb-0.5 bg-white font-bold text-[#333]' : 'text-white')}
          >
            {name}
          </button>
        ))}
      </div>
    </div>
  );
};

const StatusBar = () => (
  <footer className="flex h-[17px] shrink-0 items-center border-t border-[#d8d6d4] text-[8px] text-[#333]">
    <div className="flex w-[176px] items-center gap-2 pl-[5px]">
      <Svg size="size-[14px]">
        <path d="M1.500 1.500h11l2 2v11h-13zM4.500 1.500v5h7v-5M4.500 14.500v-5h7v5" stroke="#a5a4a3" />
      </Svg>
      Sheet 1 of 6
    </div>
    <div className="w-[217px] border-l border-[#e3e1df] pl-1.5">Selected: 1 row, 2 columns</div>
    <div className="w-[212px] border-l border-[#e3e1df] pl-[5px]">PageStyle_Mode d'emploi</div>
    <div className="min-w-0 flex-1 border-l border-[#e3e1df] pr-11 text-center">English (USA)</div>
    <div className="flex w-[32px] items-center gap-1 border-l border-[#e3e1df] pl-[7px]">
      <span className="h-[7px] w-3 shrink-0 border border-[#4a9ad0]" />
      <svg viewBox="0 0 5 12" className="h-3 w-[5px] shrink-0" fill="none" stroke="#444" aria-hidden="true">
        <path d="M0 .5h5M0 11.500h5M2.500 0v12" />
      </svg>
    </div>
    <div className="h-3 w-5 border-l border-[#e3e1df]" />
    <div className="h-3 w-5 border-l border-[#e3e1df]" />
    <div className="w-[182px] border-l border-[#e3e1df] text-center">Average: ; Sum: 0</div>
    <div className="flex w-[95px] items-center justify-center gap-[3px] border-l border-[#e3e1df] pl-1">
      <button type="button" aria-label="Zoom out"><svg viewBox="0 0 8 8" className="size-2"><path d="M0 4h8" stroke="#333" strokeWidth="1.600" /></svg></button>
      <input
        type="range"
        aria-label="Zoom"
        min="0"
        max="100"
        defaultValue="48"
        className="h-2 w-[66px] appearance-none bg-[linear-gradient(#aaa,#aaa)] bg-[length:100%_1px] bg-center bg-no-repeat [&::-webkit-slider-thumb]:h-2 [&::-webkit-slider-thumb]:w-[3px] [&::-webkit-slider-thumb]:appearance-none [&::-webkit-slider-thumb]:border [&::-webkit-slider-thumb]:border-[#555] [&::-webkit-slider-thumb]:bg-white"
      />
      <button type="button" aria-label="Zoom in"><svg viewBox="0 0 8 8" className="size-2"><path d="M0 4h8M4 0v8" stroke="#333" strokeWidth="1.600" /></svg></button>
    </div>
    <div className="w-[34px] pl-[7px]">100%</div>
  </footer>
);

const PANELS = [
  { label: 'Settings', Icon: HamburgerIcon },
  { label: 'Properties', Icon: PropertiesIcon },
  { label: 'Styles', Icon: StylesIcon },
  { label: 'Gallery', Icon: GalleryIcon },
  { label: 'Navigator', Icon: NavigatorIcon },
  { label: 'Functions', Icon: FxIcon },
];

const Sidebar = () => (
  <aside className="relative flex w-[39px] shrink-0 flex-col items-center border-l border-[#d3d1cf]">
    {PANELS.map(({ label, Icon }) => (
      <button key={label} type="button" aria-label={label} className="flex h-[29px] w-6 items-center justify-center"><Icon /></button>
    ))}
    <button type="button" aria-label="Hide sidebar" className="absolute top-[268px] left-0 flex h-[50px] w-1 items-center justify-center bg-[#929292]">
      <span className="size-0.5 rounded-full bg-white" />
    </button>
  </aside>
);

export default function App() {
  return (
    <div className="flex h-screen flex-col overflow-hidden bg-[#f6f5f4] font-['Noto_Sans',sans-serif] text-[#3d3d3d]">
      <header className="shrink-0">
        <nav aria-label="Main menu" className="mr-4 flex h-[17px] items-center gap-[11px] border-b border-[#e6e4e2] pl-[5px] text-[9px]">
          {MENUS.map((menu) => <button key={menu} type="button" className="leading-4">{menu}</button>)}
          <button type="button" aria-label="Close document" className="-mr-2 ml-auto">
            <svg viewBox="0 0 6 6" className="size-[6px]"><path d="M.5.5l5 5M5.500.5l-5 5" stroke="#222" strokeWidth="1.500" /></svg>
          </button>
        </nav>
        <StandardToolbar />
        <FormattingToolbar />
      </header>

      <div className="flex min-h-0 flex-1">
        <main className="flex min-w-0 flex-1 flex-col">
          <FormulaBar />
          <div className="flex min-h-0 flex-1">
            <div className="flex min-w-0 flex-1 flex-col">
              <div className="min-h-0 flex-1 overflow-hidden bg-white"><Sheet /></div>
              <div className="flex h-[9px] shrink-0 items-center justify-between bg-[#cbcbcb]">
                <div className="ml-0.5 h-[6px] w-[47%] rounded-full bg-[#828282]" />
                <div className="mr-0.5 h-[7px] w-px bg-[#444]" />
              </div>
            </div>
            <div className="mb-[9px] flex w-[9px] shrink-0 flex-col items-center bg-[#cbcbcb]">
              <div className="mt-px h-px w-[7px] bg-[#444]" />
              <div className="mt-[3px] h-[35%] w-[6px] rounded-full bg-[#828282]" />
            </div>
          </div>
          <SheetTabs />
        </main>
        <Sidebar />
      </div>
      <StatusBar />
    </div>
  );
}
